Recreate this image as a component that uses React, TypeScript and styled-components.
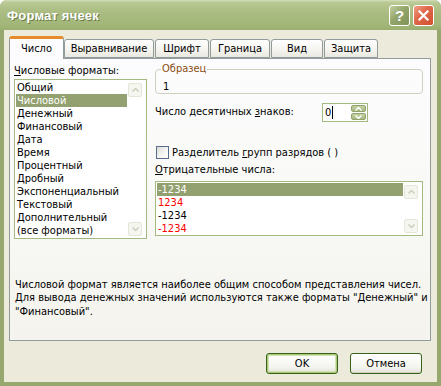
import styled, { createGlobalStyle } from 'styled-components'

const GlobalStyle = createGlobalStyle`
  html, body {
    margin: 0;
    padding: 0;
    background: #ffffff;
  }
  body {
    font-family: "DejaVu Sans Condensed", "DejaVu Sans", sans-serif;
    font-size: 11px;
    color: #000;
  }
`

const Window = styled.div`
  width: 441px;
  height: 386px;
  box-sizing: border-box;
  display: flex;
  flex-direction: column;
  background: #97a86f;
  border-radius: 7px 7px 0 0;
  overflow: hidden;
`

const TitleBar = styled.div`
  height: 30px;
  flex: none;
  display: flex;
  align-items: center;
  padding: 0 7px 0 7px;
  background: linear-gradient(
    to bottom,
    #d6dfbb 0px,
    #bccb98 2px,
    #b2c38b 6px,
    #a9bb80 14px,
    #a4b77a 24px,
    #9aae70 30px
  );
`

const Title = styled.div`
  flex: 1;
  font-family: "Liberation Sans", Arial, sans-serif;
  font-weight: bold;
  font-size: 13px;
  color: #ffffff;
  text-shadow: 1px 1px 0 #6a7a45;
  letter-spacing: 0.2px;
`

const CaptionButton = styled.div<{ $close?: boolean }>`
  width: 19px;
  height: 19px;
  margin-left: 3px;
  border: 1px solid #ffffff;
  border-radius: 3px;
  display: flex;
  align-items: center;
  justify-content: center;
  background: ${(p) =>
    p.$close
      ? 'linear-gradient(135deg, #f0a286 0%, #e06a4c 40%, #d04f30 100%)'
      : 'linear-gradient(135deg, #c3cfa2 0%, #93a56a 45%, #7f9358 100%)'};
  color: #ffffff;
  font-family: "Liberation Sans", Arial, sans-serif;
  font-weight: bold;
  font-size: 15px;
`

const Body = styled.div`
  flex: 1;
  margin: 0 4px 4px 4px;
  background: #eceadb;
  display: flex;
  flex-direction: column;
  padding: 6px 6px 0 5px;
`

const TabRow = styled.div`
  display: flex;
  align-items: flex-end;
  height: 22px;
  position: relative;
  z-index: 1;
`

const Tab = styled.div<{ $active?: boolean; $w: number }>`
  width: ${(p) => p.$w}px;
  box-sizing: border-box;
  height: ${(p) => (p.$active ? 23 : 19)}px;
  margin-right: ${(p) => (p.$active ? 0 : 1)}px;
  margin-bottom: ${(p) => (p.$active ? -1 : 0)}px;
  border: 1px solid #919b9c;
  border-bottom: ${(p) => (p.$active ? 'none' : '1px solid #919b9c')};
  border-top: ${(p) => (p.$active ? '3px solid #e68b2c' : '1px solid #919b9c')};
  border-radius: 3px 3px 0 0;
  background: ${(p) =>
    p.$active ? '#fcfcfe' : 'linear-gradient(to bottom, #ffffff 0%, #f4f3ee 60%, #e9e8e0 100%)'};
  display: flex;
  align-items: center;
  justify-content: center;
  padding-bottom: ${(p) => (p.$active ? 2 : 0)}px;
`

const Panel = styled.div`
  width: 422px;
  height: 283px;
  box-sizing: border-box;
  border: 1px solid #919b9c;
  background: linear-gradient(to bottom, #fcfcfe 0%, #f8f8f4 60%, #f4f3ee 100%);
  display: flex;
  flex-direction: column;
  padding: 5px 6px 0 4px;
`

const Columns = styled.div`
  display: grid;
  grid-template-columns: 133px 268px;
  column-gap: 8px;
`

const Column = styled.div`
  display: flex;
  flex-direction: column;
`

const Label = styled.div<{ $mt?: number }>`
  height: 14px;
  line-height: 14px;
  margin-top: ${(p) => p.$mt ?? 0}px;
  white-space: nowrap;
`

const U = styled.span`
  text-decoration: underline;
`

const ListBox = styled.div<{ $h: number; $mt?: number }>`
  height: ${(p) => p.$h}px;
  margin-top: ${(p) => p.$mt ?? 0}px;
  box-sizing: border-box;
  border: 1px solid #a4b97f;
  background: #ffffff;
  display: flex;
  padding: 1px;
`

const ListItems = styled.div`
  flex: 1;
  display: flex;
  flex-direction: column;
`

const ListItem = styled.div<{ $selected?: boolean; $red?: boolean }>`
  height: 13px;
  line-height: 13px;
  padding-left: 1px;
  white-space: nowrap;
  background: ${(p) => (p.$selected ? '#93a070' : 'transparent')};
  color: ${(p) => (p.$selected ? '#ffffff' : p.$red ? '#ff0000' : '#000000')};
`

const ScrollBar = styled.div`
  width: 16px;
  display: flex;
  flex-direction: column;
  justify-content: space-between;
  padding: 2px 1px 1px 1px;
`

const ScrollArrow = styled.div`
  width: 14px;
  height: 14px;
  box-sizing: border-box;
  border: 1px solid #e3e7d8;
  border-radius: 2px;
  background: #f5f6f0;
  display: flex;
  align-items: center;
  justify-content: center;
`

const GroupBox = styled.fieldset`
  margin: 0;
  padding: 0 0 0 7px;
  height: 31px;
  box-sizing: border-box;
  border: 1px solid #d0d0bf;
  border-radius: 4px;
  margin-top: -1px;
`

const Legend = styled.legend`
  padding: 0 1px;
  margin-left: -2px;
  line-height: 12px;
  color: #8a4e10;
`

const Sample = styled.div`
  line-height: 13px;
  margin-top: 5px;
`

const SpinRow = styled.div`
  display: flex;
  align-items: center;
  justify-content: space-between;
  margin-top: 7px;
  padding-right: 55px;
`

const SpinBox = styled.div`
  width: 46px;
  height: 19px;
  box-sizing: border-box;
  border: 1px solid #a4b97f;
  background: #ffffff;
  display: flex;
  align-items: center;
  padding: 1px 1px 1px 2px;
  margin-top: 2px;
`

const SpinText = styled.div`
  flex: 1;
  display: flex;
  align-items: center;
`

const Caret = styled.span`
  display: inline-block;
  width: 1px;
  height: 13px;
  background: #000;
  margin-left: 1px;
`

const SpinButtons = styled.div`
  width: 15px;
  height: 15px;
  display: flex;
  flex-direction: column;
  gap: 1px;
`

const SpinButton = styled.div`
  flex: 1;
  border-radius: 2px;
  background: linear-gradient(to bottom, #c4d1a3 0%, #a7b783 100%);
  border: 1px solid #8fa46a;
  box-sizing: border-box;
  display: flex;
  align-items: center;
  justify-content: center;
`

const CheckRow = styled.div`
  display: flex;
  align-items: center;
  margin-top: 23px;
  margin-left: 1px;
  height: 14px;
`

const CheckBox = styled.div`
  width: 13px;
  height: 13px;
  box-sizing: border-box;
  border: 1px solid #596b88;
  background: linear-gradient(135deg, #dcdcd6 0%, #f6f6f3 60%, #ffffff 100%);
  margin-right: 3px;
`

const Description = styled.div`
  margin-top: auto;
  margin-bottom: 22px;
  padding-left: 1px;
  line-height: 13.5px;
  white-space: nowrap;
`

const Footer = styled.div`
  display: flex;
  justify-content: flex-end;
  gap: 12px;
  padding: 12px 9px 0 0;
`

const Button = styled.div<{ $default?: boolean }>`
  width: 72px;
  height: 21px;
  box-sizing: border-box;
  border: 1px solid #37621a;
  border-radius: 3px;
  background: linear-gradient(to bottom, #ffffff 0%, #f4f4ef 70%, #e3e3da 100%);
  box-shadow: ${(p) =>
    p.$default ? 'inset 0 0 0 1px #a9c77a, inset 0 0 0 2px #d2e3b0' : 'inset 0 -1px 0 #d6d0c0'};
  display: flex;
  align-items: center;
  justify-content: center;
`

const UpArrow = () => (
  <svg width="7" height="4" viewBox="0 0 7 4">
    <path d="M0.5 3.5 L3.5 0.5 L6.5 3.5" stroke="#c9ceb8" strokeWidth="1.4" fill="none" />
  </svg>
)

const DownArrow = () => (
  <svg width="7" height="4" viewBox="0 0 7 4">
    <path d="M0.5 0.5 L3.5 3.5 L6.5 0.5" stroke="#c9ceb8" strokeWidth="1.4" fill="none" />
  </svg>
)

const SpinUp = () => (
  <svg width="7" height="4" viewBox="0 0 7 4">
    <path d="M0.5 3.5 L3.5 0.5 L6.5 3.5" stroke="#ffffff" strokeWidth="1.5" fill="none" />
  </svg>
)

const SpinDown = () => (
  <svg width="7" height="4" viewBox="0 0 7 4">
    <path d="M0.5 0.5 L3.5 3.5 L6.5 0.5" stroke="#ffffff" strokeWidth="1.5" fill="none" />
  </svg>
)

const CloseIcon = () => (
  <svg width="11" height="11" viewBox="0 0 11 11">
    <path d="M1.5 1.5 L9.5 9.5 M9.5 1.5 L1.5 9.5" stroke="#ffffff" strokeWidth="2.2" strokeLinecap="square" />
  </svg>
)

const tabs = [
  { label: 'Число', w: 55 },
  { label: 'Выравнивание', w: 90 },
  { label: 'Шрифт', w: 54 },
  { label: 'Граница', w: 60 },
  { label: 'Вид', w: 52 },
  { label: 'Защита', w: 54 },
]

const formats = [
  'Общий',
  'Числовой',
  'Денежный',
  'Финансовый',
  'Дата',
  'Время',
  'Процентный',
  'Дробный',
  'Экспоненциальный',
  'Текстовый',
  'Дополнительный',
  '(все форматы)',
]

const negatives = [
  { text: '-1234', red: false },
  { text: '1234', red: true },
  { text: '-1234', red: false },
  { text: '-1234', red: true },
]

function App() {
  return (
    <>
      <GlobalStyle />
      <Window>
        <TitleBar>
          <Title>Формат ячеек</Title>
          <CaptionButton>?</CaptionButton>
          <CaptionButton $close>
            <CloseIcon />
          </CaptionButton>
        </TitleBar>
        <Body>
          <TabRow>
            {tabs.map((t, i) => (
              <Tab key={t.label} $w={t.w} $active={i === 0}>
                {t.label}
              </Tab>
            ))}
          </TabRow>
          <Panel>
            <Columns>
              <Column>
                <Label>
                  <U>Ч</U>исловые форматы:
                </Label>
                <ListBox $h={160} $mt={1}>
                  <ListItems>
                    {formats.map((f, i) => (
                      <ListItem key={f} $selected={i === 1}>
                        {f}
                      </ListItem>
                    ))}
                  </ListItems>
                  <ScrollBar>
                    <ScrollArrow>
                      <UpArrow />
                    </ScrollArrow>
                    <ScrollArrow>
                      <DownArrow />
                    </ScrollArrow>
                  </ScrollBar>
                </ListBox>
              </Column>
              <Column>
                <GroupBox>
                  <Legend>Образец</Legend>
                  <Sample>1</Sample>
                </GroupBox>
                <SpinRow>
                  <Label>
                    Число десятичных <U>з</U>наков:
                  </Label>
                  <SpinBox>
                    <SpinText>
                      0<Caret />
                    </SpinText>
                    <SpinButtons>
                      <SpinButton>
                        <SpinUp />
                      </SpinButton>
                      <SpinButton>
                        <SpinDown />
                      </SpinButton>
                    </SpinButtons>
                  </SpinBox>
                </SpinRow>
                <CheckRow>
                  <CheckBox />
                  <span>
                    Разделитель <U>г</U>рупп разрядов ( )
                  </span>
                </CheckRow>
                <Label $mt={4}>
                  <U>О</U>трицательные числа:
                </Label>
                <ListBox $h={55} $mt={4}>
                  <ListItems>
                    {negatives.map((n, i) => (
                      <ListItem key={i} $selected={i === 0} $red={n.red}>
                        {n.text}
                      </ListItem>
                    ))}
                  </ListItems>
                  <ScrollBar>
                    <ScrollArrow>
                      <UpArrow />
                    </ScrollArrow>
                    <ScrollArrow>
                      <DownArrow />
                    </ScrollArrow>
                  </ScrollBar>
                </ListBox>
              </Column>
            </Columns>
            <Description>
              Числовой формат является наиболее общим способом представления чисел.
              <br />
              Для вывода денежных значений используются также форматы "Денежный" и
              <br />
              "Финансовый".
            </Description>
          </Panel>
          <Footer>
            <Button $default>OK</Button>
            <Button>Отмена</Button>
          </Footer>
        </Body>
      </Window>
    </>
  )
}

export default App
